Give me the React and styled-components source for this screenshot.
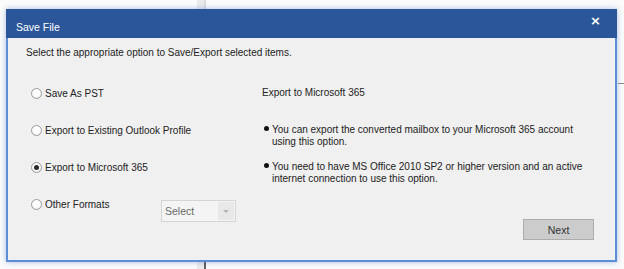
import React from 'react';
import styled, { createGlobalStyle } from 'styled-components';

const Global = createGlobalStyle`
  html, body { margin: 0; padding: 0; }
  body {
    width: 624px;
    height: 269px;
    overflow: hidden;
    background: #fbfbfb;
    font-family: "Liberation Sans", Arial, sans-serif;
  }
`;

const Page = styled.div`
  width: 624px;
  height: 269px;
  box-sizing: border-box;
  padding: 9px 0 0 6px;
  background:
    linear-gradient(#8a8a8a, #8a8a8a) no-repeat 618px 83px / 6px 1px,
    linear-gradient(#5e5e5e, #5e5e5e) no-repeat 204px 262px / 2px 7px,
    linear-gradient(to right,
      #fbfbfb 197px, #ebebeb 197px, #ebebeb 204px,
      #dcdcdc 204px, #dcdcdc 206px, #fbfbfb 206px);
`;

const Dialog = styled.div`
  width: 611px;
  height: 253px;
  display: flex;
  flex-direction: column;
  box-shadow: 0 0 6px rgba(70, 120, 200, 0.45);
`;

const TitleBar = styled.div`
  height: 29px;
  flex: none;
  display: flex;
  justify-content: space-between;
  align-items: flex-start;
  padding: 0 16px 0 10px;
  background: #2b579a;
  color: #ffffff;
`;

const Title = styled.div`
  margin-top: 12px;
  font-size: 10.5px;
  line-height: 12px;
`;

const Close = styled.div`
  margin-top: 5px;
  font-size: 13px;
  font-weight: bold;
  line-height: 13px;
  font-family: "DejaVu Sans", sans-serif;
`;

const Body = styled.div`
  flex: 1;
  display: flex;
  flex-direction: column;
  background: #f0f0f0;
  border: 2px solid #5b8ed6;
  border-top: none;
  padding: 9px 21px 20px 18px;
  color: #222222;
  font-size: 10px;
  line-height: 12px;
`;

const Intro = styled.div`
  height: 12px;
`;

const Columns = styled.div`
  flex: 1;
  display: flex;
  margin-top: 16px;
  padding-left: 5px;
`;

const LeftColumn = styled.div`
  width: 231px;
  display: flex;
  flex-direction: column;
`;

const Row = styled.div`
  height: 37px;
  display: flex;
  align-items: center;
`;

const Option = styled.label`
  display: flex;
  align-items: center;
  width: ${(p) => (p.$wide ? 'auto' : '130px')};
`;

const Radio = styled.span`
  width: 11px;
  height: 11px;
  box-sizing: border-box;
  border-radius: 50%;
  border: 1px solid #9c9c9c;
  background: radial-gradient(circle at 50% 40%, #ffffff 40%, #e6e6e6 100%);
  margin-right: 3px;
  display: flex;
  align-items: center;
  justify-content: center;
  &::after {
    content: '';
    width: 5px;
    height: 5px;
    border-radius: 50%;
    background: ${(p) => (p.$checked ? '#2a2a2a' : 'transparent')};
  }
`;

const Select = styled.div`
  align-self: flex-start;
  margin-top: 14px;
  width: 75px;
  height: 22px;
  box-sizing: border-box;
  border: 1px solid #d4d4d4;
  background: #f4f4f4;
  display: flex;
  align-items: stretch;
  color: #6a6a6a;
  font-size: 10.5px;
`;

const SelectText = styled.span`
  flex: 1;
  display: flex;
  align-items: center;
  padding-left: 3px;
`;

const SelectArrow = styled.span`
  width: 16px;
  margin: 1px;
  background: #e8e8e8;
  display: flex;
  align-items: center;
  justify-content: center;
  &::after {
    content: '';
    border-left: 3px solid transparent;
    border-right: 3px solid transparent;
    border-top: 3px solid #b3b3b3;
  }
`;

const RightColumn = styled.div`
  flex: 1;
  display: flex;
  flex-direction: column;
  padding-top: 12px;
`;

const Heading = styled.div`
  height: 12px;
`;

const List = styled.ul`
  list-style: none;
  margin: 25px 0 0 0;
  padding: 0;
  display: flex;
  flex-direction: column;
  gap: 13px;
`;

const Item = styled.li`
  position: relative;
  padding-left: 10px;
  max-width: 318px;
  &::before {
    content: '';
    position: absolute;
    left: 2px;
    top: 2px;
    width: 5px;
    height: 5px;
    border-radius: 50%;
    background: #111111;
  }
`;

const NextButton = styled.button`
  margin-top: auto;
  align-self: flex-end;
  width: 71px;
  height: 21px;
  box-sizing: border-box;
  border: 1px solid #adadad;
  background: #cccccc;
  color: #333333;
  font-family: "Liberation Sans", Arial, sans-serif;
  font-size: 10.5px;
  padding: 0;
`;

const options = [
  { label: 'Save As PST' },
  { label: 'Export to Existing Outlook Profile' },
  { label: 'Export to Microsoft 365', checked: true },
];

export default function App() {
  return (
    <>
      <Global />
      <Page>
        <Dialog>
          <TitleBar>
            <Title>Save File</Title>
            <Close>×</Close>
          </TitleBar>
          <Body>
            <Intro>Select the appropriate option to Save/Export selected items.</Intro>
            <Columns>
              <LeftColumn>
                {options.map((o) => (
                  <Row key={o.label}>
                    <Option $wide>
                      <Radio $checked={o.checked} />
                      {o.label}
                    </Option>
                  </Row>
                ))}
                <Row>
                  <Option>
                    <Radio />
                    Other Formats
                  </Option>
                  <Select>
                    <SelectText>Select</SelectText>
                    <SelectArrow />
                  </Select>
                </Row>
              </LeftColumn>
              <RightColumn>
                <Heading>Export to Microsoft 365</Heading>
                <List>
                  <Item>You can export the converted mailbox to your Microsoft 365 account using this option.</Item>
                  <Item>You need to have MS Office 2010 SP2 or higher version and an active internet connection to use this option.</Item>
                </List>
                <NextButton>Next</NextButton>
              </RightColumn>
            </Columns>
          </Body>
        </Dialog>
      </Page>
    </>
  );
}
